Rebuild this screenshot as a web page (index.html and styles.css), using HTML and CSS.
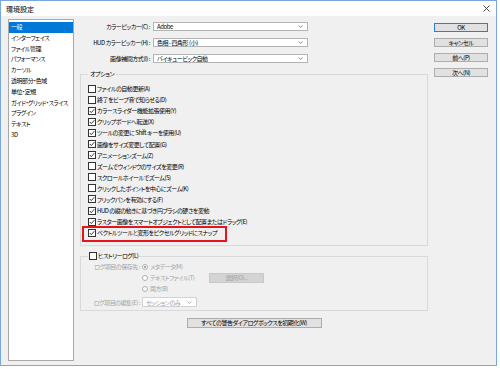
FILE: index.html
```html
<!DOCTYPE html>
<html lang="ja">
<head>
    <meta charset="UTF-8">
    <meta name="viewport" content="width=device-width, initial-scale=1.0">
    <title>環境設定</title>
    <link rel="stylesheet" href="styles.css">
</head>
<body>
    <div class="window">
        <div class="titlebar">
            <span class="title">環境設定</span>
            <svg class="close" width="7" height="7" viewBox="0 0 7 7"><path d="M0.5 0.5 L6.5 6.5 M6.5 0.5 L0.5 6.5" stroke="#333" stroke-width="0.9" fill="none"/></svg>
        </div>

        <div class="content">
            <ul class="nav">
                <li class="active">一般</li>
                <li>インターフェイス</li>
                <li>ファイル管理</li>
                <li>パフォーマンス</li>
                <li>カーソル</li>
                <li>透明部分・色域</li>
                <li>単位・定規</li>
                <li>ガイド・グリッド・スライス</li>
                <li>プラグイン</li>
                <li>テキスト</li>
                <li>3D</li>
            </ul>

            <div class="main">
                <div class="pickers">
                    <div class="field">
                        <span class="label">カラーピッカー(C) :</span>
                        <div class="select">Adobe<svg class="chev" width="5" height="3" viewBox="0 0 5 3"><polyline points="0.5,0.5 2.5,2.5 4.5,0.5" stroke="#777" stroke-width="0.8" fill="none"/></svg></div>
                    </div>
                    <div class="field">
                        <span class="label">HUD カラーピッカー(H) :</span>
                        <div class="select">色相 - 四角形 (小)<svg class="chev" width="5" height="3" viewBox="0 0 5 3"><polyline points="0.5,0.5 2.5,2.5 4.5,0.5" stroke="#777" stroke-width="0.8" fill="none"/></svg></div>
                    </div>
                    <div class="field">
                        <span class="label">画像補間方式(I) :</span>
                        <div class="select">バイキュービック自動<svg class="chev" width="5" height="3" viewBox="0 0 5 3"><polyline points="0.5,0.5 2.5,2.5 4.5,0.5" stroke="#777" stroke-width="0.8" fill="none"/></svg></div>
                    </div>
                </div>

                <fieldset class="group options">
                    <legend>オプション</legend>
                    <div class="check"><span class="box"></span>ファイルの自動更新(A)</div>
                    <div class="check"><span class="box"></span>終了をビープ音で知らせる(D)</div>
                    <div class="check on"><span class="box"></span>カラースライダー機能拡張使用(Y)</div>
                    <div class="check on"><span class="box"></span>クリップボードへ転送(X)</div>
                    <div class="check on"><span class="box"></span>ツールの変更に Shift キーを使用(U)</div>
                    <div class="check on"><span class="box"></span>画像をサイズ変更して配置(G)</div>
                    <div class="check on"><span class="box"></span>アニメーションズーム(Z)</div>
                    <div class="check"><span class="box"></span>ズームでウィンドウのサイズを変更(R)</div>
                    <div class="check"><span class="box"></span>スクロールホイールでズーム(S)</div>
                    <div class="check"><span class="box"></span>クリックしたポイントを中心にズーム(K)</div>
                    <div class="check on"><span class="box"></span>フリックパンを有効にする(F)</div>
                    <div class="check on"><span class="box"></span>HUD の縦の動きに基づき円ブラシの硬さを変動</div>
                    <div class="check on"><span class="box"></span>ラスター画像をスマートオブジェクトとして配置またはドラッグ(E)</div>
                    <div class="check on marked"><span class="box"></span>ベクトルツールと変形をピクセルグリッドにスナップ</div>
                </fieldset>

                <fieldset class="group history">
                    <legend><span class="box"></span>ヒストリーログ(L)</legend>
                    <div class="hist-grid">
                        <span class="label">ログ項目の保存先 :</span>
                        <div class="radios">
                            <div class="radio on"><span class="dot"></span>メタデータ(M)</div>
                            <div class="radio-row">
                                <div class="radio wide"><span class="dot"></span>テキストファイル(T)</div>
                                <span class="btn small disabled">選択(O)...</span>
                            </div>
                            <div class="radio"><span class="dot"></span>両方(B)</div>
                        </div>
                        <span class="label edit">ログ項目の編集(E) :</span>
                        <div class="select disabled short">セッションのみ<svg class="chev" width="5" height="3" viewBox="0 0 5 3"><polyline points="0.5,0.5 2.5,2.5 4.5,0.5" stroke="#aaa" stroke-width="0.8" fill="none"/></svg></div>
                    </div>
                </fieldset>

                <div class="reset-row">
                    <span class="btn reset">すべての警告ダイアログボックスを初期化(W)</span>
                </div>
            </div>

            <div class="actions">
                <span class="btn default">OK</span>
                <span class="btn">キャンセル</span>
                <span class="btn">前へ(P)</span>
                <span class="btn">次へ(N)</span>
            </div>
        </div>
    </div>
</body>
</html>
```

FILE: styles.css
```css
body {
    margin: 0;
    background: #ffffff;
    font-family: "Noto Sans CJK JP", "Noto Sans", sans-serif;
    font-size: 6px;
    letter-spacing: -0.45px;
    font-feature-settings: "palt" 1;
    color: #000000;
}
.window {
    width: 497px;
    height: 366px;
    box-sizing: border-box;
    border: 1px solid #7aa8dc;
    display: flex;
    flex-direction: column;
    background: #f0f0f0;
}
.titlebar {
    height: 15px;
    background: #ffffff;
    display: flex;
    align-items: center;
    justify-content: space-between;
    padding: 0 5px;
}
.title {
    font-size: 7px;
    letter-spacing: 0;
    line-height: 15px;
    margin-top: 1px;
}
.close {
    display: block;
    margin-right: 1px;
}
.content {
    flex: 1;
    display: flex;
    gap: 6px;
    padding: 3px 6px 4px 7px;
}

/* lista lateral */
.nav {
    list-style: none;
    margin: 0;
    padding: 2px 0 0;
    width: 66px;
    box-sizing: border-box;
    background: #ffffff;
    border: 1px solid #a8a8a8;
}
.nav li {
    height: 10.8px;
    line-height: 10.8px;
    padding-left: 2px;
    white-space: nowrap;
}
.nav li.active {
    background: #0078d7;
    color: #ffffff;
}

/* columna principal */
.main {
    width: 348px;
    display: flex;
    flex-direction: column;
}
.pickers {
    margin-top: 3px;
    display: flex;
    flex-direction: column;
    gap: 7px;
}
.field {
    display: flex;
    align-items: center;
    gap: 3px;
}
.field .label {
    width: 70px;
    text-align: right;
    white-space: nowrap;
}
.select {
    width: 155px;
    height: 9px;
    box-sizing: border-box;
    background: #ffffff;
    border: 1px solid #b4b4b4;
    display: flex;
    align-items: center;
    justify-content: space-between;
    padding: 0 4px 0 3px;
    line-height: 9px;
    white-space: nowrap;
}
.chev {
    display: block;
}
.select.disabled {
    color: #a3a3a3;
    border-color: #d2d2d2;
}
.select.short {
    width: 55px;
    height: 10px;
}

.group {
    margin: 0;
    border: 1px solid #d9d9d9;
    min-width: 0;
}
.group legend {
    padding: 0 2px;
    line-height: 10px;
}
.options {
    margin-top: 6px;
    padding: 4px 7px 7px;
}
.check {
    height: 11.1px;
    display: flex;
    align-items: center;
    white-space: nowrap;
    position: relative;
}
.box {
    width: 8px;
    height: 8px;
    box-sizing: border-box;
    border: 1px solid #333333;
    background: #ffffff;
    margin-right: 1px;
    flex-shrink: 0;
}
.check.on .box {
    background: #ffffff url("data:image/svg+xml,%3Csvg xmlns='http://www.w3.org/2000/svg' width='6' height='6' viewBox='0 0 6 6'%3E%3Cpolyline points='0.8,3 2.3,4.6 5.3,1.2' fill='none' stroke='%23222' stroke-width='0.9'/%3E%3C/svg%3E") center / 6px 6px no-repeat;
}
/* recuadro rojo de anotación */
.check.marked::after {
    content: "";
    position: absolute;
    left: -6px;
    top: -1px;
    width: 145px;
    height: 16px;
    box-sizing: border-box;
    border: 2px solid #e8141b;
}

.history {
    margin-top: 5px;
    padding: 0 7px 2px;
}
.history legend {
    display: flex;
    align-items: center;
    padding: 0 1px;
}
.hist-grid {
    margin-left: -3px;
    display: grid;
    grid-template-columns: 55px auto;
    column-gap: 2px;
    row-gap: 2.5px;
    align-items: center;
    color: #a3a3a3;
}
.hist-grid .label {
    text-align: right;
    white-space: nowrap;
    align-self: start;
    line-height: 11px;
}
.hist-grid .label.edit {
    align-self: center;
}
.radio {
    height: 11px;
    display: flex;
    align-items: center;
    white-space: nowrap;
}
.radio.wide {
    width: 67px;
}
.radio-row {
    display: flex;
    align-items: center;
}
.dot {
    width: 6px;
    height: 6px;
    box-sizing: border-box;
    border: 1px solid #b0b0b0;
    border-radius: 50%;
    background: #ffffff;
    margin-right: 2px;
}
.radio.on .dot {
    background: radial-gradient(circle, #a8a8a8 0 1.3px, #ffffff 1.6px);
}

/* botones */
.btn {
    display: flex;
    align-items: center;
    justify-content: center;
    height: 9px;
    box-sizing: border-box;
    background: #e1e1e1;
    border: 1px solid #adadad;
    white-space: nowrap;
    line-height: 9px;
}
.btn.default {
    border-color: #2a7fd4;
}
.btn.small {
    width: 55px;
    height: 10px;
}
.btn.disabled {
    background: #d4d4d4;
    border-color: #c8c8c8;
    color: #a0a0a0;
}
.reset-row {
    margin-top: 7px;
    display: flex;
    justify-content: center;
}
.btn.reset {
    width: 135px;
    height: 10px;
}
.actions {
    width: 54px;
    margin-top: 4px;
    display: flex;
    flex-direction: column;
    gap: 6px;
}
```
